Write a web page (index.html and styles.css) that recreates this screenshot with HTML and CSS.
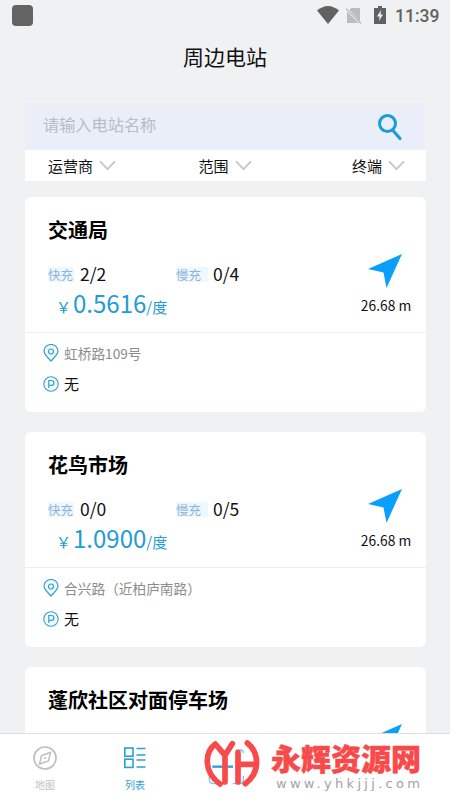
FILE: index.html
```html
<!DOCTYPE html>
<html lang="zh-CN">
<head>
<meta charset="utf-8">
<title>周边电站</title>
<link rel="stylesheet" href="styles.css">
</head>
<body>
<svg class="defs" width="0" height="0" aria-hidden="true">
  <symbol id="chevron" viewBox="0 0 16 10"><path d="M1 1l7 7.500L15 1" fill="none" stroke="#c4c4c4" stroke-width="1.700"/></symbol>
  <symbol id="nav" viewBox="0 0 34 34"><path d="M34 0L18.500 34L15.500 18.500L0 15z" fill="#0a9ffb"/></symbol>
  <symbol id="pin" viewBox="0 0 16 18"><path d="M8 17C5 13.500 1 10.500 1 7a7 6.500 0 0 1 14 0c0 3.500-4 6.500-7 10z" fill="#f1fbff" stroke="#349fcd" stroke-width="1.200"/><circle cx="8" cy="7.500" r="2.500" fill="none" stroke="#349fcd" stroke-width="1.200"/></symbol>
  <symbol id="park" viewBox="0 0 16 16"><circle cx="8" cy="8" r="7.200" fill="#f1fbff" stroke="#349fcd" stroke-width="1.100"/><path d="M5.800 12V4.500h2.700a2.400 2.400 0 0 1 0 4.800H5.800" fill="none" stroke="#349fcd" stroke-width="1.200"/></symbol>
</svg>
<div class="app">
  <header class="status">
    <span class="status-app"></span>
    <svg class="wifi" viewBox="0 0 22 18"><path d="M0 4.500Q11-4.500 22 4.500L11 18z" fill="#616161"/></svg>
    <svg class="sim" viewBox="0 0 16 17"><path d="M5 1h9v13.500L3.500 3zM1 4.500L12.500 16H1z" fill="#bcbcbd"/><path d="M0 1.500L15 16.500" stroke="#bcbcbd" stroke-width="1.500"/></svg>
    <svg class="battery" viewBox="0 0 12 18"><path d="M4 0h4v2h4v16H0V2h4z" fill="#616161"/><path d="M7 4L3 10.500h2.600L5 15l4-6.500H6.500z" fill="#f0f1f3"/></svg>
    <span class="time">11:39</span>
  </header>
  <h1 class="title">周边电站</h1>
  <section class="search">
    <span class="placeholder">请输入电站名称</span>
    <svg class="search-icon" viewBox="0 0 26 28"><circle cx="10.500" cy="10.500" r="8" fill="none" stroke="#1c9bd9" stroke-width="3"/><path d="M16 17.500l7 8" stroke="#1c9bd9" stroke-width="3.200" stroke-linecap="round"/></svg>
  </section>
  <nav class="filters">
    <span class="filter">运营商<svg><use href="#chevron"/></svg></span>
    <span class="filter">范围<svg><use href="#chevron"/></svg></span>
    <span class="filter">终端<svg><use href="#chevron"/></svg></span>
  </nav>
  <main class="list">
    <article class="card">
      <div class="card-main">
        <div class="info">
          <h2 class="name">交通局</h2>
          <div class="piles"><span class="pile"><i class="tag">快充</i>2/2</span><span class="pile"><i class="tag">慢充</i>0/4</span></div>
          <div class="price"><small>￥</small>0.5616<small>/度</small></div>
        </div>
        <div class="go"><svg><use href="#nav"/></svg><span>26.68 m</span></div>
      </div>
      <div class="place"><svg class="pin"><use href="#pin"/></svg>虹桥路109号</div>
      <div class="parking"><svg class="park"><use href="#park"/></svg>无</div>
    </article>
    <article class="card">
      <div class="card-main">
        <div class="info">
          <h2 class="name">花鸟市场</h2>
          <div class="piles"><span class="pile"><i class="tag">快充</i>0/0</span><span class="pile"><i class="tag">慢充</i>0/5</span></div>
          <div class="price"><small>￥</small>1.0900<small>/度</small></div>
        </div>
        <div class="go"><svg><use href="#nav"/></svg><span>26.68 m</span></div>
      </div>
      <div class="place"><svg class="pin"><use href="#pin"/></svg>合兴路（近柏庐南路）</div>
      <div class="parking"><svg class="park"><use href="#park"/></svg>无</div>
    </article>
    <article class="card">
      <div class="card-main">
        <div class="info">
          <h2 class="name">蓬欣社区对面停车场</h2>
        </div>
        <div class="go"><svg><use href="#nav"/></svg></div>
      </div>
    </article>
  </main>
  <footer class="tabs">
    <div class="tab">
      <svg viewBox="0 0 24 24" fill="none" stroke="#bfbfbf"><circle cx="12" cy="12" r="11" stroke-width="1.700"/><path d="M17.500 6.500l-2 8.500-9 3 2-8.500z" stroke-width="1.500"/><circle cx="12" cy="12" r=".7"/></svg>
      <span>地图</span>
    </div>
    <div class="tab active">
      <svg viewBox="0 0 24 24" fill="none" stroke="#2b9fd6" stroke-width="1.600"><rect x="1.800" y="2" width="8.200" height="8.200"/><rect x="1.800" y="13.200" width="8.200" height="8.200"/><path d="M13.500 2.500h9M13.500 9h9M13.500 14h9M13.500 21h9"/></svg>
      <span>列表</span>
    </div>
    <div class="brand">
      <svg class="brand-logo" viewBox="0 0 195 186" fill="none">
        <path d="M28 62V52Q28 43 40 43M108 54h14q8 0 8 10M28 132v10q0 13 13 13h12M98 155h22q10 0 10-14v-10" stroke="#7cc5ea" stroke-width="4"/>
        <path d="M37 104h62" stroke="#239fdc" stroke-width="7"/>
        <g stroke="#f84a4a" stroke-width="17" stroke-linecap="round" stroke-linejoin="round"><path d="M97 35L75 70L46 36C15 60 8 118 60 156M75 70V150M114 62V150M114 97H166M142 33C180 64 180 122 136 155"/></g>
      </svg>
      <div class="brand-text"><strong>永辉资源网</strong><span>www.yhkjjj.com</span></div>
    </div>
  </footer>
</div>
</body>
</html>
```
FILE: styles.css
```css
* { box-sizing: border-box; margin: 0; padding: 0; }
body { width: 450px; height: 799px; overflow: hidden; background: #f0f1f3; color: #111; font-family: "Noto Sans CJK SC", sans-serif; }
.defs { position: absolute; }
svg { display: block; flex: none; }
.app { height: 799px; display: flex; flex-direction: column; }

.status { height: 32px; flex: none; display: flex; align-items: center; padding: 0 11px 2px 12px; }
.status-app { width: 21px; height: 21px; border-radius: 4px; background: #636363; margin-right: auto; }
.wifi { width: 22px; height: 18px; }
.sim { width: 16px; height: 17px; margin-left: 7px; }
.battery { width: 12px; height: 18px; margin-left: 12px; }
.time { font: 500 17.5px/24px Roboto, sans-serif; color: #626262; margin-left: 9px; width: 44px; padding-top: 2px; white-space: nowrap; }

.title { height: 71px; flex: none; font-size: 21px; font-weight: 400; line-height: 48px; text-align: center; }

.search { height: 47px; flex: none; margin: 0 25px; padding: 0 22px 0 18px; background: #e9eef8; display: flex; align-items: center; justify-content: space-between; }
.placeholder { font-size: 16.2px; line-height: 42px; height: 47px; color: #b8bcc5; }
.search-icon { width: 26px; height: 28px; }
.filters { height: 31px; flex: none; margin: 0 24px 0 25px; padding: 0 21px 0 23px; background: #fff; display: flex; align-items: center; justify-content: space-between; }
.filter { display: flex; align-items: center; gap: 6px; font-size: 15px; line-height: 30px; }
.filter svg { width: 17px; height: 11px; }
.filter:nth-child(2) { margin-left: -18px; }

.list { flex: 1; min-height: 0; overflow: hidden; margin: 16px 24px 0 25px; display: flex; flex-direction: column; gap: 20px; }
.card { height: 215px; flex: none; background: #fff; border-radius: 6px; }
.card-main { height: 136px; border-bottom: 1px solid #ededee; display: flex; justify-content: space-between; padding: 17px 15px 0 23px; }
.name { font-size: 20px; font-weight: 700; line-height: 32px; white-space: nowrap; color: #000; }
.piles { display: flex; margin-top: 16px; }
.pile { width: 128px; display: flex; align-items: center; gap: 6px; font-size: 17.5px; line-height: 24px; }
.pile + .pile { gap: 5px; }
.tag { font-style: normal; font-size: 12.5px; line-height: 15px; color: #91b1dc; background: #edf9ff; width: 26px; white-space: nowrap; }
.pile + .pile .tag { width: 32px; }
.price { display: flex; align-items: baseline; font-size: 24px; line-height: 34px; color: #239bd5; padding-left: 8px; }
.price small { font-size: 15px; }
.price small:first-child { width: 17px; }
.go { width: 50px; padding-top: 40px; display: flex; flex-direction: column; align-items: center; }
.go svg { width: 34px; height: 34px; margin-right: 2px; }
.go span { font-size: 13.8px; line-height: 20px; margin-top: 7px; white-space: nowrap; }
.place, .parking { display: flex; align-items: center; gap: 5px; padding-left: 18px; }
.place { font-size: 13.7px; line-height: 30px; height: 30px; margin-top: 5px; color: #8c8c8c; }
.parking { font-size: 15px; height: 32px; line-height: 32px; }
.pin { width: 16px; height: 18px; }
.park { width: 16px; height: 16px; }

.tabs { height: 66px; flex: none; background: #fff; border-top: 1px solid #dedede; display: flex; }
.tab { width: 90px; padding-top: 12px; display: flex; flex-direction: column; align-items: center; font-size: 10px; line-height: 14px; gap: 8px; color: #c3c3c3; }
.tab svg { width: 24px; height: 24px; }
.active { color: #2b9fd6; }
.brand { display: flex; margin-left: 20px; }
.brand-logo { width: 65px; height: 62px; margin-top: -2px; }
.brand-text { padding: 7px 0 0 6px; display: flex; flex-direction: column; }
.brand-text strong { font-size: 30px; font-weight: 900; line-height: 32px; height: 35px; color: #f84a4a; -webkit-text-stroke: .5px #f84a4a; }
.brand-text span { font: 13px/16px "DejaVu Sans", sans-serif; letter-spacing: 3.3px; color: #a2a2a4; padding-left: 5px; white-space: nowrap; }
```
